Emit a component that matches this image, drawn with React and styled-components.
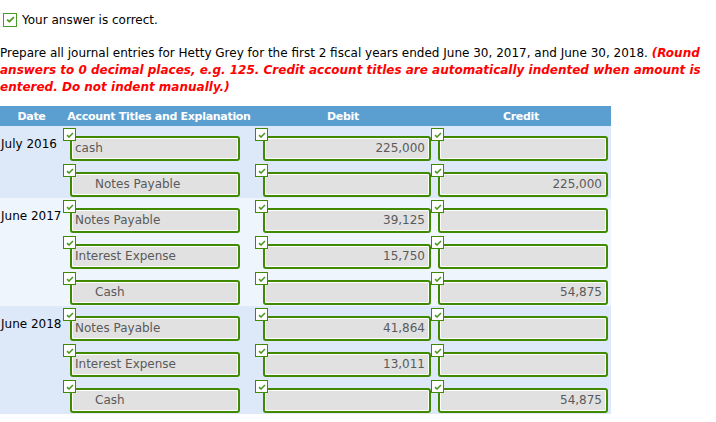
import React from "react";
import styled, { createGlobalStyle } from "styled-components";

const GlobalStyle = createGlobalStyle`
  body {
    margin: 0;
    background: #fff;
    font-family: "DejaVu Sans", Verdana, sans-serif;
    color: #000;
  }
`;

const Page = styled.div`
  width: 716px;
  padding-top: 12px;
`;

const Status = styled.div`
  display: flex;
  align-items: center;
  gap: 5px;
  padding-left: 3px;
  height: 15px;
  font-size: 12px;
`;

const StatusBox = styled.span`
  display: flex;
  align-items: center;
  justify-content: center;
  box-sizing: border-box;
  width: 14px;
  height: 14px;
  border: 1px solid #4b9a22;
  background: #fff;
`;

const Instructions = styled.p`
  margin: 18px 0 0;
  font-size: 12px;
  line-height: 17px;
`;

const Hint = styled.em`
  color: #f00;
  font-weight: bold;
`;

const Journal = styled.div`
  margin-top: 10px;
  width: 611px;
`;

const HeaderRow = styled.div`
  display: grid;
  grid-template-columns: 63px 192px 176px 180px;
  align-items: center;
  height: 20px;
  background: #5b9fd1;
  color: #fff;
  font-size: 11px;
  letter-spacing: -0.3px;
  font-weight: bold;
  text-align: center;
  white-space: nowrap;
`;

const Group = styled.div`
  display: grid;
  grid-template-columns: 63px 1fr;
  background: ${(p) => (p.$light ? "#eef5fd" : "#dde9f8")};
`;

const DateCell = styled.div`
  padding: 10px 0 0 1px;
  font-size: 12px;
  line-height: 16px;
  white-space: nowrap;
`;

const Line = styled.div`
  display: grid;
  grid-template-columns: 192px 176px 180px;
  height: 36px;
`;

const Cell = styled.div`
  position: relative;
  padding: 10px 0 0 ${(p) => p.$inset}px;
`;

const Mark = styled.span`
  position: absolute;
  left: 0;
  top: 2px;
  z-index: 1;
  display: flex;
  align-items: center;
  justify-content: center;
  box-sizing: border-box;
  width: 13px;
  height: 13px;
  border: 1px solid #3f8a00;
  background: #fff;
`;

const Field = styled.div`
  box-sizing: border-box;
  width: ${(p) => p.$w}px;
  height: 25px;
  border: 2px solid #3f8a00;
  border-radius: 3px;
  background: #e1e1e1;
  box-shadow: inset 0 0 0 1px #fff;
  padding: 0 4px 0 ${(p) => (p.$indent ? 23 : 3)}px;
  font-size: 12px;
  line-height: 21px;
  color: #5a5a5a;
  text-align: ${(p) => (p.$right ? "right" : "left")};
  white-space: nowrap;
  overflow: hidden;
`;

function Tick({ size = 8 }) {
  return (
    <svg width={size} height={size * 0.75} viewBox="0 0 8 6">
      <polyline
        points="1,3.2 3,5 7,1"
        fill="none"
        stroke="#4a9a1e"
        strokeWidth="1.6"
      />
    </svg>
  );
}

const groups = [
  {
    date: "July 2016",
    lines: [
      { account: "cash", debit: "225,000", credit: "" },
      { account: "Notes Payable", indent: true, debit: "", credit: "225,000" },
    ],
  },
  {
    date: "June 2017",
    light: true,
    lines: [
      { account: "Notes Payable", debit: "39,125", credit: "" },
      { account: "Interest Expense", debit: "15,750", credit: "" },
      { account: "Cash", indent: true, debit: "", credit: "54,875" },
    ],
  },
  {
    date: "June 2018",
    lines: [
      { account: "Notes Payable", debit: "41,864", credit: "" },
      { account: "Interest Expense", debit: "13,011", credit: "" },
      { account: "Cash", indent: true, debit: "", credit: "54,875" },
    ],
  },
];

function EntryCell({ inset, width, children, indent, right }) {
  return (
    <Cell $inset={inset}>
      <Mark>
        <Tick />
      </Mark>
      <Field $w={width} $indent={indent} $right={right}>
        {children}
      </Field>
    </Cell>
  );
}

export default function App() {
  return (
    <>
      <GlobalStyle />
      <Page>
        <Status>
          <StatusBox>
            <Tick size={9} />
          </StatusBox>
          Your answer is correct.
        </Status>
        <Instructions>
          Prepare all journal entries for Hetty Grey for the first 2 fiscal years ended June 30, 2017, and June 30, 2018.{" "}
          <Hint>
            (Round answers to 0 decimal places, e.g. 125. Credit account titles are automatically indented when amount is
            entered. Do not indent manually.)
          </Hint>
        </Instructions>
        <Journal>
          <HeaderRow>
            <span>Date</span>
            <span>Account Titles and Explanation</span>
            <span>Debit</span>
            <span>Credit</span>
          </HeaderRow>
          {groups.map((g) => (
            <Group key={g.date} $light={g.light}>
              <DateCell>{g.date}</DateCell>
              <div>
                {g.lines.map((l, i) => (
                  <Line key={i}>
                    <EntryCell inset={7} width={170} indent={l.indent}>
                      {l.account}
                    </EntryCell>
                    <EntryCell inset={8} width={168} right>
                      {l.debit}
                    </EntryCell>
                    <EntryCell inset={7} width={170} right>
                      {l.credit}
                    </EntryCell>
                  </Line>
                ))}
              </div>
            </Group>
          ))}
        </Journal>
      </Page>
    </>
  );
}
